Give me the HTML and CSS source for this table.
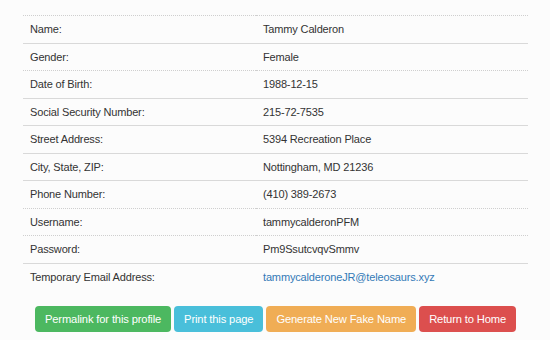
FILE: index.html
```html
<!DOCTYPE html>
<html>
<head>
<meta charset="utf-8">
<link rel="stylesheet" href="styles.css">
</head>
<body>
<div class="wrap">
  <table class="info">
    <tr class="dot"><td>Name:</td><td>Tammy Calderon</td></tr>
    <tr><td>Gender:</td><td>Female</td></tr>
    <tr class="dot"><td>Date of Birth:</td><td>1988-12-15</td></tr>
    <tr><td>Social Security Number:</td><td>215-72-7535</td></tr>
    <tr><td>Street Address:</td><td>5394 Recreation Place</td></tr>
    <tr><td>City, State, ZIP:</td><td>Nottingham, MD 21236</td></tr>
    <tr><td>Phone Number:</td><td>(410) 389-2673</td></tr>
    <tr class="dot"><td>Username:</td><td>tammycalderonPFM</td></tr>
    <tr class="dot"><td>Password:</td><td>Pm9SsutcvqvSmmv</td></tr>
    <tr><td>Temporary Email Address:</td><td><a class="link" href="#">tammycalderoneJR@teleosaurs.xyz</a></td></tr>
  </table>
  <div class="actions">
    <a class="btn green" href="#">Permalink for this profile</a>
    <a class="btn cyan" href="#">Print this page</a>
    <a class="btn orange" href="#">Generate New Fake Name</a>
    <a class="btn red" href="#">Return to Home</a>
  </div>
</div>
</body>
</html>
```
FILE: styles.css
```css
html, body { margin: 0; padding: 0; }
body {
  background: #fcfcfc;
  font-family: "Liberation Sans", Arial, sans-serif;
  font-size: 11px;
  letter-spacing: -0.15px;
  color: #333;
}
.wrap {
  width: 505px;
  margin: 0 auto;
  padding-top: 15px;
  padding-left: 1px;
}
.info {
  width: 100%;
  border-collapse: collapse;
}
.info td {
  padding: 5px 7px;
  line-height: 16.5px;
  border-top: 1px solid #d9d9d9;
}
.info tr.dot td { border-top: 1px dotted #cfcfcf; }
.info td:first-child { width: 219px; }
.link { color: #337ab7; text-decoration: none; }
.actions {
  display: flex;
  justify-content: center;
  gap: 3px;
  margin-top: 16px;
}
.btn {
  display: block;
  white-space: nowrap;
  color: #fff;
  text-decoration: none;
  padding: 0 10px;
  font-size: 11.2px;
  line-height: 26px;
  border-radius: 4px;
}
.green { background: #4cb860; }
.cyan { background: #49bfda; }
.orange { background: #f0ad55; }
.red { background: #dc4f4e; }
```
